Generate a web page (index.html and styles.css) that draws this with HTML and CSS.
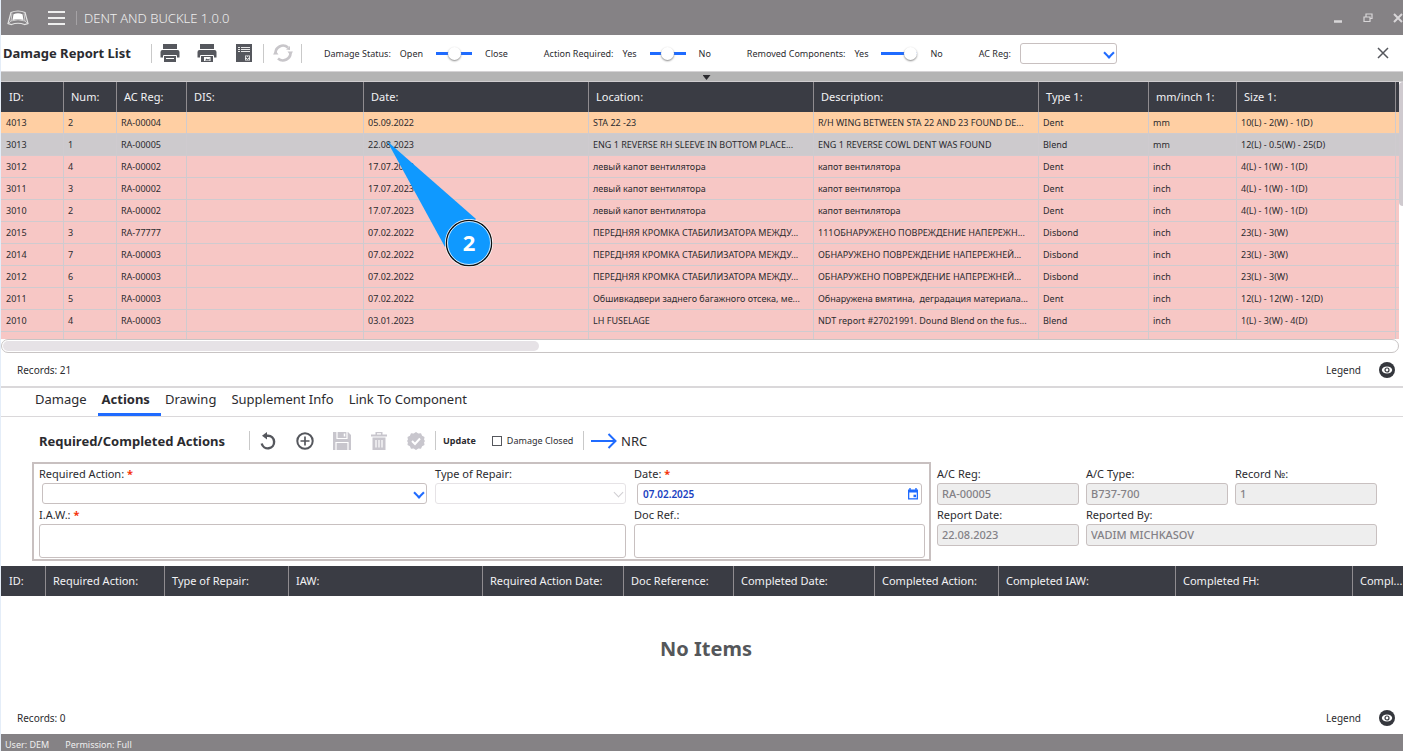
FILE: index.html
```html
<!DOCTYPE html>
<html lang="en">
<head>
  <meta charset="UTF-8" />
  <meta name="viewport" content="width=device-width, initial-scale=1.0" />
  <title>Dent and Buckle 1.0.0</title>
  <link rel="stylesheet" href="styles.css">
</head>
<body>
  <header class="titlebar">
    <svg class="logo" width="22" height="16" viewBox="0 0 22 16">
      <path d="M4 2.500Q11-.5 18 2.500L21 13.500 17.500 14.500Q11 12 4.500 14.500L1 13.500Z" fill="none" stroke="#e4e4e4" stroke-width="1.200"/>
      <path d="M6.500 4.200Q11 2.500 15.500 4.200L16.500 10Q11 8.500 5.500 10Z" fill="#fff"/>
      <path d="M5 3.500L4 11M17 3.500L18 11M4 11Q11 8.500 18 11M4 11L1.500 13.500M18 11L20.500 13.500" fill="none" stroke="#ddd" stroke-width=".8"/>
    </svg>
    <button class="menu-toggle" aria-label="Menu"><span></span><span></span><span></span></button>
    <h1 class="app-name">DENT AND BUCKLE 1.0.0</h1>
    <div class="window-buttons">
      <button aria-label="Minimize"><svg width="10" height="12" viewBox="0 0 10 12"><path d="M1 9.500h8" stroke="#d8d6d8" stroke-width="2.500"/></svg></button>
      <button aria-label="Restore"><svg width="10" height="12" viewBox="0 0 10 12"><path d="M1 5h6v4.500h-6zM3 4.500v-2.500h6v4.500h-2" fill="none" stroke="#d8d6d8" stroke-width="1.200"/></svg></button>
      <button aria-label="Close"><svg width="10" height="12" viewBox="0 0 10 12"><path d="M1 2l8 8M9 2l-8 8" stroke="#d8d6d8" stroke-width="2"/></svg></button>
    </div>
  </header>

  <section class="toolbar">
    <h2>Damage Report List</h2>
    <div class="tools report-tools">
      <button class="icon" aria-label="Print"><svg width="20" height="20" viewBox="0 0 20 20"><path d="M3 1h14v5h-14zM2.500 7h15q2 0 2 2v5.500h-19v-5.500q0-2 2-2zM4 14h12v5h-12z" fill="#55575d"/><path d="M3.500 12.500h13M3.500 12.500v2.500M16.500 12.500v2.500M6 15.500h8" stroke="#fff" fill="none"/></svg></button>
      <button class="icon" aria-label="Print with pictures"><svg width="20" height="20" viewBox="0 0 20 20"><path d="M3 1h14v5h-14zM2.500 7h15q2 0 2 2v5.500h-19v-5.500q0-2 2-2zM4 14h12v5h-12z" fill="#55575d"/><path d="M3.500 12.500h13M3.500 12.500v2.500M16.500 12.500v2.500" stroke="#fff" fill="none"/><path d="M7 14h6.500v4h-6.500z" fill="#fff"/><path d="M8 17.500l1.500-2 1.500 1 1.500-1v2z" fill="#55575d"/></svg></button>
      <button class="icon" aria-label="Export to Excel"><svg width="20" height="20" viewBox="0 0 20 20"><path d="M2 1h16v18h-16z" fill="#55575d"/><path d="M4 4.500h2m1 0h9M4 6.500h2m1 0h9M4 8.500h2m1 0h9" stroke="#e8e8e8"/><path d="M11 12.500h5v5h-5z" fill="#eee"/><path d="M12 13.500l3 3M15 13.500l-3 3" stroke="#55575d" stroke-width="1.200"/></svg></button>
    </div>
    <div class="tools refresh-tools">
      <button class="icon" aria-label="Refresh" disabled><svg width="20" height="20" viewBox="0 0 20 20"><path d="M2.600 11A7.500 7.500 0 0 1 15 4.500M17.400 9A7.500 7.500 0 0 1 5 15.500" fill="none" stroke="#c8c6ca" stroke-width="2.600"/><path d="M0 11.500l2.500-4 3 4zM14.500 8.500h5.500l-2.500 4zM13 6.500l4-3.500v4z" fill="#c8c6ca"/></svg></button>
    </div>
    <div class="filters">
      <div class="filter"><label for="status">Damage Status:</label><span>Open</span><input id="status" type="range" min="0" max="2" value="1"><span>Close</span></div>
      <div class="filter"><label for="required">Action Required:</label><span>Yes</span><input id="required" type="range" min="0" max="2" value="1"><span>No</span></div>
      <div class="filter"><label for="removed">Removed Components:</label><span>Yes</span><input id="removed" type="range" min="0" max="2" value="2"><span>No</span></div>
      <div class="filter"><label for="acreg">AC Reg:</label><div class="select"><select id="acreg"><option></option></select></div></div>
    </div>
    <button class="close" aria-label="Close list"><svg width="12" height="12" viewBox="0 0 12 12"><path d="M1 1l10 10M11 1l-10 10" stroke="#55575d" stroke-width="1.500"/></svg></button>
  </section>

  <div class="splitter"><span class="arrow"></span></div>

  <section class="report-pane">
    <div class="report-rows">
      <table class="grid reports">
        <colgroup><col class="w-id"><col class="w-num"><col class="w-reg"><col class="w-dis"><col class="w-wide"><col class="w-wide"><col class="w-wide"><col class="w-type"><col class="w-unit"><col><col class="w-rest"></colgroup>
        <thead>
          <tr><th>ID:</th><th>Num:</th><th>AC Reg:</th><th>DIS:</th><th>Date:</th><th>Location:</th><th>Description:</th><th>Type 1:</th><th>mm/inch 1:</th><th>Size 1:</th><th></th></tr>
        </thead>
        <tbody>
          <tr class="planned"><td>4013</td><td>2</td><td>RA-00004</td><td></td><td>05.09.2022</td><td>STA 22 -23</td><td>R/H WING BETWEEN STA 22 AND 23 FOUND DE...</td><td>Dent</td><td>mm</td><td>10(L) - 2(W) - 1(D)</td><td></td></tr>
          <tr class="selected"><td>3013</td><td>1</td><td>RA-00005</td><td></td><td>22.08.2023</td><td>ENG 1 REVERSE RH SLEEVE IN BOTTOM PLACE...</td><td>ENG 1 REVERSE COWL DENT WAS FOUND</td><td>Blend</td><td>mm</td><td>12(L) - 0.5(W) - 25(D)</td><td></td></tr>
          <tr><td>3012</td><td>4</td><td>RA-00002</td><td></td><td>17.07.2023</td><td>левый капот вентилятора</td><td>капот вентилятора</td><td>Dent</td><td>inch</td><td>4(L) - 1(W) - 1(D)</td><td></td></tr>
          <tr><td>3011</td><td>3</td><td>RA-00002</td><td></td><td>17.07.2023</td><td>левый капот вентилятора</td><td>капот вентилятора</td><td>Dent</td><td>inch</td><td>4(L) - 1(W) - 1(D)</td><td></td></tr>
          <tr><td>3010</td><td>2</td><td>RA-00002</td><td></td><td>17.07.2023</td><td>левый капот вентилятора</td><td>капот вентилятора</td><td>Dent</td><td>inch</td><td>4(L) - 1(W) - 1(D)</td><td></td></tr>
          <tr><td>2015</td><td>3</td><td>RA-77777</td><td></td><td>07.02.2022</td><td>ПЕРЕДНЯЯ КРОМКА СТАБИЛИЗАТОРА МЕЖДУ...</td><td>111ОБНАРУЖЕНО ПОВРЕЖДЕНИЕ НАПЕРЕЖН...</td><td>Disbond</td><td>inch</td><td>23(L) - 3(W)</td><td></td></tr>
          <tr><td>2014</td><td>7</td><td>RA-00003</td><td></td><td>07.02.2022</td><td>ПЕРЕДНЯЯ КРОМКА СТАБИЛИЗАТОРА МЕЖДУ...</td><td>ОБНАРУЖЕНО ПОВРЕЖДЕНИЕ НАПЕРЕЖНЕЙ...</td><td>Disbond</td><td>inch</td><td>23(L) - 3(W)</td><td></td></tr>
          <tr><td>2012</td><td>6</td><td>RA-00003</td><td></td><td>07.02.2022</td><td>ПЕРЕДНЯЯ КРОМКА СТАБИЛИЗАТОРА МЕЖДУ...</td><td>ОБНАРУЖЕНО ПОВРЕЖДЕНИЕ НАПЕРЕЖНЕЙ...</td><td>Disbond</td><td>inch</td><td>23(L) - 3(W)</td><td></td></tr>
          <tr><td>2011</td><td>5</td><td>RA-00003</td><td></td><td>07.02.2022</td><td>Обшивкадвери заднего багажного отсека, ме...</td><td>Обнаружена вмятина,&nbsp; деградация материала...</td><td>Dent</td><td>inch</td><td>12(L) - 12(W) - 12(D)</td><td></td></tr>
          <tr><td>2010</td><td>4</td><td>RA-00003</td><td></td><td>03.01.2023</td><td>LH FUSELAGE</td><td>NDT report #27021991. Dound Blend on the fus...</td><td>Blend</td><td>inch</td><td>1(L) - 3(W) - 4(D)</td><td></td></tr>
          <tr><td></td><td></td><td></td><td></td><td></td><td></td><td></td><td></td><td></td><td></td><td></td></tr>
        </tbody>
      </table>
    </div>
    <div class="vscroll"></div>
    <!-- step marker pointing at the selected row -->
    <svg class="callout" width="108" height="130" viewBox="0 0 108 130">
      <path d="M2 2L91 80L60 108Z" fill="#0f99ff"/>
      <circle cx="84" cy="104" r="24" fill="#fff"/>
      <circle cx="84" cy="104" r="22.500" fill="#0f99ff" stroke="#111" stroke-width="1.500"/>
      <circle cx="84" cy="104" r="21.500" fill="none" stroke="#fff" stroke-width="0.800"/>
      <text x="84" y="112" text-anchor="middle">2</text>
    </svg>
  </section>
  <div class="hscroll"><span></span></div>

  <div class="summary">
    <span>Records: 21</span>
    <span class="legend">Legend</span>
    <button class="eye" aria-label="Show legend"><svg width="16" height="16" viewBox="0 0 16 16"><circle cx="8" cy="8" r="8" fill="#35373d"/><ellipse cx="8" cy="8" rx="5.200" ry="3.500" fill="#fff"/><circle cx="8" cy="8" r="2" fill="#fff" stroke="#35373d" stroke-width="1.200"/></svg></button>
  </div>

  <nav class="tabs">
    <a href="#damage">Damage</a>
    <a href="#actions" class="active">Actions</a>
    <a href="#drawing">Drawing</a>
    <a href="#supplement">Supplement Info</a>
    <a href="#component">Link To Component</a>
  </nav>

  <section class="actions-bar">
    <h3>Required/Completed Actions</h3>
    <div class="tools action-tools">
      <button class="icon" aria-label="Undo"><svg width="18" height="18" viewBox="0 0 18 18"><path d="M6 3.700H9A6.300 6.300 0 1 1 2.700 11.500" fill="none" stroke="#55575d" stroke-width="2.400"/><path d="M8 0v7.500l-5-3.800z" fill="#55575d"/></svg></button>
      <button class="icon" aria-label="Add"><svg width="18" height="18" viewBox="0 0 18 18"><circle cx="9" cy="9" r="7.700" fill="none" stroke="#55575d" stroke-width="2"/><path d="M9 4.500v9M4.500 9h9" stroke="#55575d" stroke-width="1.700"/></svg></button>
      <button class="icon" aria-label="Save" disabled><svg width="18" height="18" viewBox="0 0 18 18"><path d="M0 0h15l3 3v15h-18z" fill="#c8c6cd"/><path d="M4 0v6.500h10v-6.500M3 18v-7.500h12v7.500" fill="none" stroke="#fff" stroke-width="1.200"/><path d="M11.500 1.500v3" stroke="#fff" stroke-width="1.500"/></svg></button>
      <button class="icon" aria-label="Delete" disabled><svg width="18" height="18" viewBox="0 0 18 18"><path d="M1 2.500h4.500v-2.500h7v2.500h4.500v2h-16zM2.500 5.500h13v12.500h-13z" fill="#c8c6cd"/><path d="M7 1.800h4M6 8v7.500M9 8v7.500M12 8v7.500" stroke="#fff" stroke-width="1.200"/></svg></button>
      <button class="icon" aria-label="Approve" disabled><svg width="18" height="18" viewBox="0 0 18 18"><path d="M9 0l2.300 1.500 2.700-.2 1.100 2.500 2.400 1.300-.4 2.600 .9 1.300-.9 1.300 .4 2.600-2.400 1.300-1.100 2.500-2.700-.2-2.300 1.500-2.300-1.500-2.700 .2-1.100-2.500-2.400-1.300 .4-2.600-.9-1.300 .9-1.300-.4-2.600 2.400-1.300 1.100-2.500 2.700 .2z" fill="#c8c6cd"/><path d="M5 9l3 3 5-5.500" fill="none" stroke="#fff" stroke-width="2"/></svg></button>
    </div>
    <div class="tools update-tools">
      <button class="update">Update</button>
      <label class="check"><input type="checkbox"> Damage Closed</label>
    </div>
    <button class="nrc"><svg width="26" height="16" viewBox="0 0 26 16"><path d="M0 8h24.500M17.500 1l7 7-7 7" fill="none" stroke="#1f6bff" stroke-width="2"/></svg>NRC</button>
  </section>

  <section class="details">
    <form class="action-form">
      <div class="field inset"><label for="action">Required Action: <b>*</b></label><div class="select"><select id="action"><option></option></select></div></div>
      <div class="field"><label for="repair">Type of Repair:</label><div class="select off"><select id="repair" disabled><option></option></select></div></div>
      <div class="field inset"><label for="date">Date: <b>*</b></label>
        <div class="date"><input id="date" type="text" value="07.02.2025"><svg width="10" height="12" viewBox="0 0 10 12"><path d="M0 1.500h10v10h-10z" fill="#1f6bff"/><path d="M1.300 4.500h7.400v5.700h-7.400z" fill="#fff"/><path d="M2 0v2M8 0v2" stroke="#1f6bff" stroke-width="1.400"/><path d="M5.500 6.700h2.500v2.500h-2.500z" fill="#1f6bff"/></svg></div></div>
      <div class="field iaw"><label for="iaw">I.A.W.: <b>*</b></label><textarea id="iaw"></textarea></div>
      <div class="field"><label for="docref">Doc Ref.:</label><textarea id="docref"></textarea></div>
    </form>
    <div class="aircraft">
      <div class="field"><label for="ac-reg">A/C Reg:</label><input id="ac-reg" value="RA-00005" readonly></div>
      <div class="field"><label for="ac-type">A/C Type:</label><input id="ac-type" value="B737-700" readonly></div>
      <div class="field"><label for="record">Record №:</label><input id="record" value="1" readonly></div>
      <div class="field"><label for="report-date">Report Date:</label><input id="report-date" value="22.08.2023" readonly></div>
      <div class="field reporter"><label for="reporter">Reported By:</label><input id="reporter" value="VADIM MICHKASOV" readonly></div>
    </div>
  </section>

  <section class="action-pane">
    <table class="grid">
      <colgroup><col class="a-id"><col class="a-required"><col class="a-repair"><col class="a-iaw"><col class="a-date"><col class="a-doc"><col class="a-date"><col class="a-action"><col class="a-long"><col class="a-long"><col></colgroup>
      <thead>
        <tr><th>ID:</th><th>Required Action:</th><th>Type of Repair:</th><th>IAW:</th><th>Required Action Date:</th><th>Doc Reference:</th><th>Completed Date:</th><th>Completed Action:</th><th>Completed IAW:</th><th>Completed FH:</th><th>Compl...</th></tr>
      </thead>
    </table>
    <p class="empty">No Items</p>
  </section>

  <div class="summary">
    <span>Records: 0</span>
    <span class="legend">Legend</span>
    <button class="eye" aria-label="Show legend"><svg width="16" height="16" viewBox="0 0 16 16"><circle cx="8" cy="8" r="8" fill="#35373d"/><ellipse cx="8" cy="8" rx="5.200" ry="3.500" fill="#fff"/><circle cx="8" cy="8" r="2" fill="#fff" stroke="#35373d" stroke-width="1.200"/></svg></button>
  </div>

  <footer class="statusbar"><span>User: DEM</span><span>Permission: Full</span></footer>
</body>
</html>
```
FILE: styles.css
```css
* { box-sizing: border-box; margin: 0; padding: 0; }

body {
  display: flex;
  flex-direction: column;
  height: 100vh;
  overflow: hidden;
  border-left: 1px solid #e4edf8;
  font-family: "Noto Sans", "Open Sans", sans-serif;
  font-size: 11px;
  color: #2b2b2f;
  background: #fff;
}

button {
  border: none;
  background: none;
  font: inherit;
  color: inherit;
  cursor: pointer;
}

svg { display: block; }

input, select, textarea {
  font: inherit;
  color: inherit;
}

/* title bar */
.titlebar {
  display: flex;
  align-items: center;
  flex: none;
  height: 35px;
  padding-left: 6px;
  background: #858285;
  color: #eee;
}

.menu-toggle {
  display: flex;
  flex-direction: column;
  gap: 4px;
  width: 17px;
  margin: 0 11px 0 19px;
}

.menu-toggle span {
  height: 2px;
  background: #eee;
}

.app-name {
  padding-left: 7px;
  border-left: 1px solid #a5a2a5;
  font-size: 13px;
  font-weight: 300;
  line-height: 14px;
}

.window-buttons {
  display: flex;
  gap: 20px;
  margin-left: auto;
}

/* list toolbar */
.toolbar {
  display: flex;
  align-items: center;
  flex: none;
  height: 36px;
  padding: 0 14px 0 2px;
}

h2 {
  width: 148px;
  font-size: 13px;
  white-space: nowrap;
}

.tools {
  display: flex;
  align-items: center;
  height: 19px;
  border-left: 1px solid #c9c9c9;
}

.report-tools {
  gap: 17px;
  width: 112px;
  padding-left: 8px;
}

.refresh-tools {
  width: 39px;
  padding-left: 9px;
  border-right: 1px solid #c9c9c9;
}

.filters {
  display: flex;
  gap: 36px;
  margin-left: 22px;
  font-size: 9px;
  white-space: nowrap;
}

.filter {
  display: flex;
  align-items: center;
  gap: 9px;
}

.filter input {
  appearance: none;
  width: 36px;
  height: 14px;
  margin: 0 4px;
  background: linear-gradient(#1f6bff, #1f6bff) center / 100% 3px no-repeat;
}

.filter input::-webkit-slider-thumb {
  appearance: none;
  width: 13px;
  height: 13px;
  border-radius: 50%;
  background: #fff;
  box-shadow: 0 1px 2px #888;
}

.filter .select { width: 97px; }

.select {
  position: relative;
  height: 21px;
}

.select::after {
  content: "";
  position: absolute;
  right: 4px;
  top: 6px;
  width: 6px;
  height: 6px;
  border: solid #1f6bff;
  border-width: 0 2px 2px 0;
  transform: rotate(45deg);
  pointer-events: none;
}

.select.off::after {
  border-color: #d0ced2;
  border-width: 0 1px 1px 0;
}

select, textarea, .field input {
  display: block;
  appearance: none;
  width: 100%;
  height: 100%;
  border: 1px solid #c8c0c0;
  border-radius: 3px;
  background: #fff;
  resize: none;
}

select:disabled { border-color: #dcd8dc; }

.close { margin-left: auto; }

/* bar that resizes the list */
.splitter {
  display: flex;
  justify-content: center;
  flex: none;
  height: 11px;
  padding: 3px 0 0 9px;
  border-top: 1px solid #d5d3d5;
  border-bottom: 1px solid #d0cdd0;
  background: #b4b4b4;
}

.arrow {
  width: 8px;
  height: 5px;
  background: #2b2b2f;
  clip-path: polygon(0 0, 100% 0, 50% 100%);
}

.report-pane {
  position: relative;
  display: flex;
  flex: none;
  height: 257px;
}

.report-rows {
  flex: 1;
  min-width: 0;
  overflow: hidden;
}

.vscroll {
  width: 4px;
  height: 124px;
  border-radius: 4px 0 0 4px;
  background: #cfcacf;
}

.grid {
  width: 100%;
  table-layout: fixed;
  border-collapse: separate;
  border-spacing: 0;
}

.grid th {
  height: 30px;
  padding: 0 7px 2px;
  border-right: 1px solid #8f8c90;
  background: #3a3c44;
  color: #f2f2f4;
  font-weight: 400;
  text-align: left;
  white-space: nowrap;
  overflow: hidden;
}

.grid th:first-child { padding-left: 8px; }
.grid th:last-child { border-right: none; }

.grid td {
  height: 22px;
  padding: 0 4px;
  border-right: 1px solid #cfcbcf;
  border-bottom: 1px solid #cfcbcf;
  background: #f7c7c5;
  font-size: 9px;
  white-space: nowrap;
  overflow: hidden;
}

.grid td:first-child { padding-left: 5px; }
.grid td:last-child { border-right: none; }
.grid td:last-child, .reports th:last-child { padding: 0; }

.grid .planned td { background: #ffcfa3; }
.grid .selected td { background: #cdcacd; }

.w-id { width: 63px; }
.w-num { width: 53px; }
.w-reg { width: 70px; }
.w-dis { width: 177px; }
.w-wide { width: 225px; }
.w-type { width: 110px; }
.w-unit { width: 88px; }
.w-rest { width: 3px; }

.callout {
  position: absolute;
  left: 384px;
  top: 57px;
}

.callout text {
  fill: #fff;
  font-size: 22px;
  font-weight: 700;
}

.hscroll {
  flex: none;
  height: 14px;
  margin-right: 4px;
  padding: 1px;
  border: 1px solid #c8c4c4;
  border-radius: 7px;
}

.hscroll span {
  display: block;
  width: 536px;
  height: 10px;
  border-radius: 5px;
  background: #e6e2e6;
}

.summary {
  display: flex;
  align-items: center;
  flex: none;
  height: 33px;
  padding: 0 8px 0 16px;
  font-size: 10px;
}

.legend {
  margin-left: auto;
  margin-right: 18px;
}

.tabs {
  display: flex;
  flex: none;
  height: 31px;
  padding-left: 30px;
  border-top: 2px solid #dad8da;
  border-bottom: 1px solid #dad8da;
  font-size: 13px;
  line-height: 23px;
}

.tabs a {
  padding: 0 11px 0 4px;
  color: inherit;
  text-decoration: none;
}

.tabs .active {
  border-bottom: 3px solid #1f6bff;
  font-weight: 700;
}

.actions-bar {
  display: flex;
  align-items: center;
  flex: none;
  height: 45px;
  padding: 2px 0 0 38px;
  white-space: nowrap;
}

h3 {
  width: 210px;
  font-size: 13px;
}

.action-tools {
  gap: 19px;
  width: 186px;
  padding-left: 9px;
}

.update-tools {
  gap: 16px;
  width: 149px;
  padding-left: 7px;
  border-right: 1px solid #c9c9c9;
  font-size: 9px;
}

.update { font-weight: 700; }

.check {
  display: flex;
  align-items: center;
  gap: 5px;
}

.check input {
  appearance: none;
  width: 10px;
  height: 10px;
  border: 1px solid #55575d;
}

.nrc {
  display: flex;
  align-items: center;
  gap: 4px;
  margin-left: 7px;
  font-size: 13px;
}

/* form and aircraft data */
.details {
  display: grid;
  grid-template-columns: 899fr 440fr;
  gap: 6px;
  flex: none;
  padding: 0 26px 5px 31px;
}

.action-form {
  display: grid;
  grid-template-columns: 388fr 191fr 291fr;
  column-gap: 8px;
  padding: 0 4px 1px 5px;
  border: 2px solid #c8c0c0;
}

.field label {
  display: block;
  line-height: 19px;
  white-space: nowrap;
}

.field b { color: #f5330a; }

.field.inset .select { margin-left: 3px; }
.field.inset .date { margin: 0 3px; }

.iaw { grid-column: span 2; }

.field textarea { height: 34px; }

.date {
  position: relative;
  height: 22px;
}

.date input {
  padding: 0 0 1px 5px;
  color: #1a3fbf;
  font-size: 10px;
  font-weight: 600;
}

.date svg {
  position: absolute;
  right: 4px;
  top: 5px;
}

.aircraft {
  display: grid;
  grid-template-columns: repeat(3, 1fr);
  column-gap: 7px;
  align-content: start;
  padding-top: 2px;
}

.aircraft input {
  height: 22px;
  padding: 0 0 1px 4px;
  background: #eee;
  color: #838186;
  font-weight: 500;
}

.reporter { grid-column: span 2; }

/* actions list */
.action-pane {
  display: flex;
  flex-direction: column;
  flex: 1;
  min-height: 0;
}

.a-id { width: 45px; }
.a-required { width: 119px; }
.a-repair { width: 124px; }
.a-iaw { width: 194px; }
.a-date { width: 141px; }
.a-doc { width: 110px; }
.a-action { width: 124px; }
.a-long { width: 177px; }

.empty {
  margin: auto;
  padding-left: 8px;
  color: #55575a;
  font-size: 20px;
  font-weight: 700;
}

.statusbar {
  display: flex;
  gap: 16px;
  flex: none;
  height: 17px;
  padding: 4px 4px 0;
  background: #858285;
  color: #eee;
  font-size: 9px;
  line-height: 14px;
}
```
